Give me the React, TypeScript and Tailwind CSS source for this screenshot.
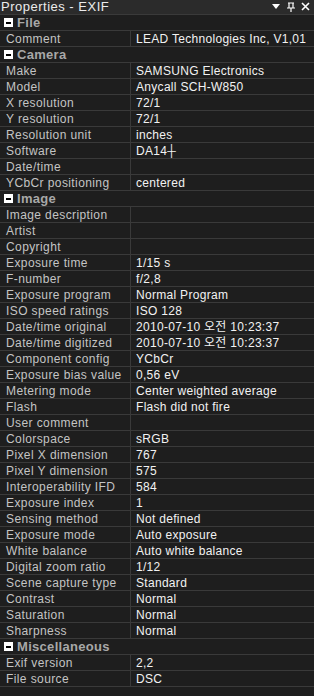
import React from "react";

type Row = { k: string; v?: string } | { h: string };

const rows: Row[] = [
  { h: "File" },
  { k: "Comment", v: "LEAD Technologies Inc, V1,01" },
  { h: "Camera" },
  { k: "Make", v: "SAMSUNG Electronics" },
  { k: "Model", v: "Anycall SCH-W850" },
  { k: "X resolution", v: "72/1" },
  { k: "Y resolution", v: "72/1" },
  { k: "Resolution unit", v: "inches" },
  { k: "Software", v: "DA14┼" },
  { k: "Date/time", v: "" },
  { k: "YCbCr positioning", v: "centered" },
  { h: "Image" },
  { k: "Image description", v: "" },
  { k: "Artist", v: "" },
  { k: "Copyright", v: "" },
  { k: "Exposure time", v: "1/15 s" },
  { k: "F-number", v: "f/2,8" },
  { k: "Exposure program", v: "Normal Program" },
  { k: "ISO speed ratings", v: "ISO 128" },
  { k: "Date/time original", v: "2010-07-10 오전 10:23:37" },
  { k: "Date/time digitized", v: "2010-07-10 오전 10:23:37" },
  { k: "Component config", v: "YCbCr" },
  { k: "Exposure bias value", v: "0,56 eV" },
  { k: "Metering mode", v: "Center weighted average" },
  { k: "Flash", v: "Flash did not fire" },
  { k: "User comment", v: "" },
  { k: "Colorspace", v: "sRGB" },
  { k: "Pixel X dimension", v: "767" },
  { k: "Pixel Y dimension", v: "575" },
  { k: "Interoperability IFD", v: "584" },
  { k: "Exposure index", v: "1" },
  { k: "Sensing method", v: "Not defined" },
  { k: "Exposure mode", v: "Auto exposure" },
  { k: "White balance", v: "Auto white balance" },
  { k: "Digital zoom ratio", v: "1/12" },
  { k: "Scene capture type", v: "Standard" },
  { k: "Contrast", v: "Normal" },
  { k: "Saturation", v: "Normal" },
  { k: "Sharpness", v: "Normal" },
  { h: "Miscellaneous" },
  { k: "Exif version", v: "2,2" },
  { k: "File source", v: "DSC" },
];

const font = {
  fontFamily: '"Liberation Sans", "Noto Sans CJK KR", sans-serif',
};

export default function App() {
  return (
    <div
      className="w-[314px] h-[696px] bg-[#1e1e1e] overflow-hidden flex flex-col text-[12px] leading-[14px]"
      style={font}
    >
      <div className="h-[14px] bg-[#2b2b2b] flex items-center pl-[1px] pr-[3px] border-b border-[#3a3a3a] box-content">
        <span className="text-[#ececec] text-[13px] leading-[14px] tracking-[0.5px] flex-1">Properties - EXIF</span>
        <svg width="40" height="12" viewBox="0 0 40 12" className="block">
          <path d="M1 3 L9 3 L5 8 Z" fill="#ffffff" />
          <path d="M17 2 H23 M18 2 V7 H22 V2 M16 7 H24 M20 7 V11" stroke="#ffffff" strokeWidth="1.2" fill="none" />
          <path d="M31 2 L38 9 M38 2 L31 9" stroke="#ffffff" strokeWidth="1.6" />
        </svg>
      </div>
      {rows.map((r, i) =>
        "h" in r ? (
          <div key={i} className="h-[16px] border-b border-[#3a3a3a] flex items-center bg-[#1e1e1e]">
            <div className="ml-[4px] w-[9px] h-[9px] bg-white flex items-center justify-center">
              <div className="w-[5px] h-[2px] bg-black" />
            </div>
            <span className="ml-[4px] font-bold text-[#a8a8a8] text-[13px] tracking-[0.3px]">{r.h}</span>
          </div>
        ) : (
          <div key={i} className="h-[16px] border-b border-[#3a3a3a] flex">
            <div className="w-[131px] border-r border-[#3a3a3a] pl-[6px] pt-[1px] tracking-[0.4px] text-[#c4c4c4] whitespace-nowrap overflow-hidden">
              {r.k}
            </div>
            <div className="flex-1 pl-[5px] pt-[1px] tracking-[0.3px] text-[#f2f2f2] whitespace-nowrap overflow-hidden">
              {r.v}
            </div>
          </div>
        )
      )}
    </div>
  );
}
